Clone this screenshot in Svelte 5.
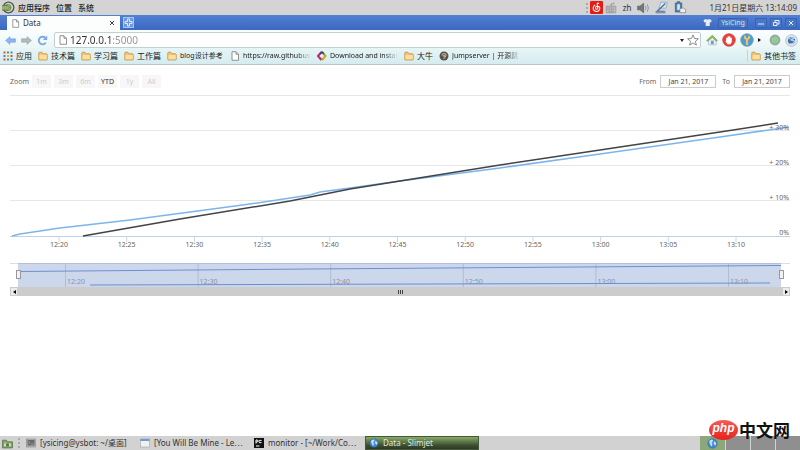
<script>
  const menus = ["应用程序", "位置", "系统"];

  const bookmarks = [
    { label: "应用", icon: "apps", width: 16 },
    { label: "技术篇", icon: "folder", width: 24 },
    { label: "学习篇", icon: "folder", width: 24 },
    { label: "工作篇", icon: "folder", width: 24 },
    { label: "blog设计参考", icon: "folder", width: 44 },
    { label: "https://raw.githubus", icon: "page", width: 68, fade: true },
    { label: "Download and instal", icon: "diamond", width: 68, fade: true },
    { label: "大牛", icon: "folder", width: 16 },
    { label: "Jumpserver | 开源跳", icon: "jump", width: 68, fade: true },
  ];

  const ranges = ["1m", "3m", "6m", "YTD", "1y", "All"];
  let range = $state("YTD");
  let address = $state("127.0.0.1:5000");
  let from = $state("Jan 21, 2017");
  let to = $state("Jan 21, 2017");

  const ticks = ["12:20", "12:25", "12:30", "12:35", "12:40", "12:45", "12:50", "12:55", "13:00", "13:05", "13:10"];
  const navTicks = ["12:20", "12:30", "12:40", "12:50", "13:00", "13:10"];
  const levels = ["0%", "+ 10%", "+ 20%", "+ 30%"];

  const blue = "2,141 10,139 50,133 120,125 240,109 300,100 310,97 340,93 390,86 490,73 590,59 710,42 779,32";
  const black = "73,141 170,124 280,106 340,94 390,86 490,70 590,55 710,37 768,28";

  const tasks = [
    { label: "[ysicing@ysbot: ~/桌面]", icon: "terminal" },
    { label: "[You Will Be Mine - Le⋯", icon: "window" },
    { label: "monitor - [~/Work/Co⋯", icon: "pycharm" },
    { label: "Data - Slimjet", icon: "globe", active: true },
  ];
</script>

{#snippet icon(name, size = 10)}
  <svg class="icon" width={size} height={size} viewBox="0 0 20 20" aria-hidden="true">
    {#if name === "suse"}
      <circle cx="10" cy="10" r="8.200" fill="none" stroke="#4d5747" stroke-width="2" />
      <circle cx="9" cy="10" r="4.400" fill="none" stroke="#6f8f4e" stroke-width="2" />
      <path d="M0 7h8l4 3-4 4H0" fill="#8fb56a" stroke="#59653f" />
    {:else if name === "apps"}
      {#each [0, 1, 2] as row}
        {#each [0, 1, 2] as col}
          <rect x={1 + col * 7} y={1 + row * 7} width="4" height="4" fill={["#e0493a", "#4a9c55", "#4a7fd8", "#efb32f"][(row * 2 + col) % 4]} />
        {/each}
      {/each}
    {:else if name === "folder"}
      <path d="M1.5 17V4q0-1.500 1.500-1.500h5l2 3h7q1.500 0 1.500 1.500v10q0 1-1 1h-15q-1 0-1-1z" fill="#f5c36f" stroke="#c28a3b" stroke-width="1.400" />
      <path d="M3 8h14.500v8.500H3z" fill="#ffdf9f" />
    {:else if name === "page"}
      <path d="M4 1.500h8l5 5v12H4z" fill="#fff" stroke="#777" stroke-width="1.600" />
      <path d="M12 1.500v5h5" fill="#ddd" stroke="#777" stroke-width="1.600" />
    {:else if name === "diamond"}
      <path d="M9 2L2 10l7 8" fill="none" stroke="#c32672" stroke-width="4" />
      <path d="M10 2l7 8-7 8" fill="none" stroke="#9cae2c" stroke-width="4" />
      <path d="M6 6l4-4 4 4" fill="none" stroke="#4a3b79" stroke-width="3" />
      <path d="M12 16l5-6" stroke="#e8a92c" stroke-width="3" />
    {:else if name === "jump"}
      <circle cx="10" cy="10" r="9" fill="#5b5148" />
      <path d="M6 9q-1-4 4-4 5 0 4 4-1 3-5 7M9 8v3M12 8l-2 4" fill="none" stroke="#d6cbbb" stroke-width="1.700" />
    {:else if name === "back" || name === "forward"}
      <path
        d={name === "back" ? "M1 10l8-7v4h10v6H9v4z" : "M19 10l-8-7v4H1v6h10v4z"}
        fill={name === "back" ? "#8db7ee" : "#b5b9bb"}
        stroke={name === "back" ? "#6b98d8" : "#969b9e"}
      />
    {:else if name === "reload"}
      <path d="M16 14a7 7 0 1 1-1-9" fill="none" stroke="#7ba7e6" stroke-width="3.400" />
      <path d="M18.500 1v8h-8z" fill="#7ba7e6" />
    {:else if name === "star"}
      <path d="M10 1.500l2.600 6 6.400.5-5 4.200 1.600 6.300L10 15l-5.600 3.500L6 12.200 1 8l6.400-.5z" fill="#fff" stroke="#777" stroke-width="1.400" />
    {:else if name === "home"}
      <path d="M4 9v9h13V9l-6.500-5z" fill="#eef4fa" stroke="#9aa9b3" />
      <path d="M1 11l9.500-9 8.500 9-2 1-6.500-6L3 12z" fill="#8cc159" stroke="#6e9a48" />
      <path d="M8 11h5v6H8z" fill="#6f9cdc" />
    {:else if name === "stop"}
      <circle cx="10" cy="10" r="9" fill="#e8403e" stroke="#c93a37" />
      <path d="M6 10V7q1-1 2 0V5q1-1 2 0 1-1 2 0v2q1-1 2 0v6l-2 3H8l-3-4z" fill="#fff" />
    {:else if name === "key"}
      <circle cx="10" cy="10" r="9" fill="#4d9dd2" stroke="#7295ad" />
      <path d="M10 9v8" fill="none" stroke="#f2c25c" stroke-width="3" />
      <path d="M7 4v3l3 2 3-2V4" fill="none" stroke="#f2c25c" stroke-width="2.600" />
    {:else if name === "dot"}
      <circle cx="10" cy="10" r="7.500" fill="#88d190" stroke="#a0a4a3" stroke-width="3" />
    {:else if name === "slimjet"}
      <circle cx="10" cy="10" r="9" fill="#dbe6ef" stroke="#9fb0bf" />
      <circle cx="10" cy="10" r="5.500" fill="#3e6ea9" />
      <path d="M5 8q5-4 9-1l-5 2 6 2q-2 5-7 4" fill="none" stroke="#b9d6f3" stroke-width="1.600" />
    {:else if name === "globe"}
      <circle cx="10" cy="10" r="8.500" fill="#438bd0" stroke="#315f9d" />
      <path d="M4 6q3-4 6-3l1 3-3 2 2 3-2 5-3-6zM13 6l4 3-2 5-3-4z" fill="#c4e4fb" />
    {:else if name === "music"}
      <rect width="20" height="20" rx="2" fill="#e51c12" />
      <path d="M14 4q-3-2-3 1l1 6q-1 3-3 1-2-3 2-4 5 0 4 4-1 4-5 4-6-1-5-6 1-3 3-4" fill="none" stroke="#fff" stroke-width="1.600" />
    {:else if name === "keyboard"}
      <path d="M10 7V3h5V1M2 7h16v11H2z" fill="#c1c1c1" stroke="#999" stroke-width="1.500" />
      <path d="M4 10h12M4 13h12M6 16h8" stroke="#888" stroke-width="1.500" stroke-dasharray="2 1" />
    {:else if name === "sound"}
      <path d="M1 7h4l6-5v16l-6-5H1z" fill="#777" stroke="#4d4d4d" />
      <path d="M14 7q2 3 0 6M17 4q4 6 0 12" fill="none" stroke="#6e8fbd" stroke-width="1.500" />
    {:else if name === "network"}
      <path d="M9 2h10l-2 9H6z" fill="#dbe8f5" stroke="#7f9dbb" />
      <path d="M16 4L3 16h12" fill="none" stroke="#4871a5" stroke-width="2" />
      <path d="M1 16h15v3H1z" fill="#89939c" />
    {:else if name === "battery"}
      <path d="M5 1h4v2h3v14H2V3h3z" fill="#517eac" stroke="#365c85" />
      <path d="M5 5h4v9H5z" fill="#dce9f2" />
      <path d="M9 12q6-3 9 1v5H9z" fill="#eee" stroke="#777" />
    {:else if name === "shirt"}
      <path d="M6 2L1 5l2 5 3-1v9h9V9l3 1 1-5-5-3q-4 3-8 0z" fill="#e6edf7" />
    {:else if name === "files"}
      <path d="M1 4h7l2 3h9v11H1z" fill="#87a86d" stroke="#587247" stroke-width="1.500" />
      <path d="M4 10h12v5H4z" fill="#d6e1c9" />
      <circle cx="10" cy="12.500" r="3" fill="#587247" />
    {:else if name === "terminal"}
      <rect x="1" y="2" width="18" height="16" fill="#b5b5b5" stroke="#777" />
      <rect x="3" y="4" width="14" height="11" fill="#696b69" />
      <path d="M5 7l3 2-3 2M10 12h5" fill="none" stroke="#ccc" />
    {:else if name === "window"}
      <rect x="1" y="2" width="18" height="16" fill="#f1f1f1" stroke="#999" />
      <path d="M1 2h18v4H1z" fill="#6f9bd1" />
    {:else if name === "pycharm"}
      <rect width="20" height="20" fill="#111" />
      <path d="M4 11V4h3q3 2 0 4H4M15 5q-5-2-5 2t5 2M4 16h7" fill="none" stroke="#fff" stroke-width="2" />
    {/if}
  </svg>
{/snippet}

<div class="desktop">
  <header class="panel">
    {@render icon("suse", 13)}
    <nav class="menus">
      {#each menus as menu}<button>{menu}</button>{/each}
    </nav>
    <div class="tray">
      <div class="applets">
        <span class="grip"></span>
        {@render icon("music", 13)}
        {@render icon("keyboard", 12)}
      </div>
      <span class="lang">zh</span>
      {@render icon("sound", 12)}
      {@render icon("network", 13)}
      {@render icon("battery", 13)}
    </div>
    <time>1月21日星期六 13:14:09</time>
  </header>

  <div class="tabs">
    <div class="tab">
      {@render icon("page", 9)}
      <span>Data</span>
      <button aria-label="Close tab">
        <svg width="6" height="6" viewBox="0 0 6 6"><path d="M1 1l4 4M5 1L1 5" stroke="#444" /></svg>
      </button>
    </div>
    <button class="new-tab" aria-label="New tab">
      <svg width="9" height="9" viewBox="0 0 9 9"><path d="M3.500 1h2v2.500H8v2H5.500V8h-2V5.500H1v-2h2.500z" fill="none" stroke="#fff" stroke-width=".8" /></svg>
    </button>
    <div class="window-controls">
      {@render icon("shirt", 9)}
      <button class="user">YsiCing</button>
      <button aria-label="Minimize"><svg width="8" height="8" viewBox="0 0 8 8"><path d="M1 5h6" /></svg></button>
      <button aria-label="Restore"><svg width="8" height="8" viewBox="0 0 8 8"><path d="M3 3V1.500h4V5H5M1.500 3.500h3.500v3H1.500z" /></svg></button>
      <button aria-label="Close"><svg width="8" height="8" viewBox="0 0 8 8"><path d="M2 2l4 4M6 2L2 6" /></svg></button>
    </div>
  </div>

  <div class="toolbar">
    <button aria-label="Back">{@render icon("back", 11)}</button>
    <button aria-label="Forward">{@render icon("forward", 11)}</button>
    <button aria-label="Reload">{@render icon("reload", 11)}</button>
    <div class="address">
      {@render icon("page", 10)}
      <input type="text" aria-label="Address" bind:value={address} />
      <span class="caret"></span>
      {@render icon("star", 12)}
    </div>
    <div class="extensions">
      <button aria-label="Home">{@render icon("home", 12)}</button>
      <button aria-label="Block">{@render icon("stop", 14)}</button>
      <button aria-label="Passwords">{@render icon("key", 14)}</button>
      <span class="more"></span>
      <button aria-label="Status">{@render icon("dot", 12)}</button>
      <button aria-label="Menu">{@render icon("slimjet", 13)}</button>
    </div>
  </div>

  <nav class="bookmarks">
    {#each bookmarks as item}
      <a href="#{item.icon}">
        {@render icon(item.icon, 10)}
        <span class:fade={item.fade} class:latin={/[a-z]/.test(item.label)} style="width: {item.width}px">{item.label}</span>
      </a>
    {/each}
    <a class="other" href="#other">{@render icon("folder", 10)}<span>其他书签</span></a>
  </nav>

  <main>
    <div class="controls">
      <span>Zoom</span>
      <div class="ranges">
        {#each ranges as r}
          <button class:selected={r === range} onclick={() => (range = r)}>{r}</button>
        {/each}
      </div>
      <div class="dates">
        <label for="from">From</label>
        <input id="from" type="text" bind:value={from} />
        <label for="to">To</label>
        <input id="to" type="text" bind:value={to} />
      </div>
    </div>

    <svg class="chart" viewBox="0 0 780 160">
      <g shape-rendering="crispEdges" stroke="#e6e6e6">
        {#each [0, 1, 2, 3] as i}
          <path d="M0 {0.5 + i * 35}H780" />
        {/each}
        <path d="M0 141.500H780" stroke="#c3cfe4" />
      </g>
      {#each ticks as tick, i}
        <path d="M{49 + i * 67.7} 142v5" stroke="#ccd6eb" />
        <text x={49 + i * 67.7} y="152" text-anchor="middle">{tick}</text>
      {/each}
      <polyline points={blue} stroke="#7cb5ec" />
      <polyline points={black} stroke="#434348" />
      {#each levels as level, i}
        <text x="779" y={140 - i * 35} text-anchor="end">{level}</text>
      {/each}
    </svg>

    <div class="navigator">
      <svg viewBox="0 0 780 24">
        <path d="M0 .5H780" stroke="#ddd" />
        {#each navTicks as tick, i}
          <path d="M{55.500 + i * 132.6} 1V24" stroke="#d4d8df" />
          <text x={57 + i * 132.6} y="21" class="faint">{tick}</text>
        {/each}
        <path d="M8 8.500L300 6 771 2.500" stroke="#6f94d8" fill="none" />
        <path d="M80 22L760 20" stroke="#6f94d8" />
        <rect x="8" y="0" width="763" height="24" fill="#6685c2" fill-opacity=".33" />
      </svg>
      <button class="handle left" aria-label="Range start"></button>
      <button class="handle right" aria-label="Range end"></button>
    </div>
    <div class="scrollbar">
      <button aria-label="Scroll left"><svg width="3" height="4" viewBox="0 0 3 4"><path d="M3 0v4L0 2z" /></svg></button>
      <span class="thumb"><i></i><i></i><i></i></span>
      <button aria-label="Scroll right"><svg width="3" height="4" viewBox="0 0 3 4"><path d="M0 0v4l3-2z" /></svg></button>
    </div>
  </main>

  <footer class="taskbar">
    {@render icon("files", 11)}
    <span class="grip"></span>
    {#each tasks as task}
      <button class="task" class:active={task.active}>
        {@render icon(task.icon, 10)}
        <span>{task.label}</span>
      </button>
    {/each}
    <div class="pager">
      <button class="current" aria-label="Workspace 1">{@render icon("globe", 11)}</button>
      <button aria-label="Workspace 2"></button>
      <button aria-label="Workspace 3"></button>
      <button aria-label="Workspace 4"></button>
    </div>
  </footer>

  <div class="watermark"><span class="php">php</span><span>中文网</span></div>
</div>

<style>
  :global(body) {
    margin: 0;
    background: #fff;
  }

  .desktop {
    position: relative;
    display: flex;
    flex-direction: column;
    min-height: 100vh;
    font: 8px/12px "Noto Sans", "Noto Sans CJK SC", sans-serif;
    color: #333;
  }

  .desktop * {
    box-sizing: border-box;
  }

  button,
  input {
    margin: 0;
    padding: 0;
    border: 0;
    background: none;
    font: inherit;
    color: inherit;
  }

  button {
    display: flex;
    align-items: center;
    justify-content: center;
  }

  svg {
    display: block;
    flex: none;
  }

  .panel {
    display: flex;
    align-items: center;
    height: 15px;
    padding: 0 3px 0 2px;
    background: #d4d4d4;
  }

  .menus {
    display: flex;
    gap: 6px;
    margin-left: 3px;
    font-weight: 500;
    color: #222;
  }

  .tray {
    display: flex;
    align-items: center;
    gap: 6px;
    margin-left: auto;
  }

  .applets {
    display: flex;
    align-items: center;
    gap: 2px;
  }

  .grip {
    width: 2px;
    height: 10px;
    border-left: 2px dotted #aaa;
  }

  time {
    margin-left: 22px;
    white-space: nowrap;
  }

  .tabs {
    display: flex;
    align-items: flex-end;
    height: 15px;
    padding-left: 7px;
    background: linear-gradient(#5180d4, #3c68c0);
  }

  .tab {
    display: flex;
    align-items: center;
    gap: 3px;
    width: 113px;
    height: 14px;
    padding: 0 5px 0 4px;
    background: #fcfefe;
  }

  .tab button {
    margin-left: auto;
  }

  .new-tab {
    width: 11px;
    height: 11px;
    margin: 0 0 2px 3px;
    border: 1px solid #a9c4f0;
    background: #6b98e0;
  }

  .window-controls {
    display: flex;
    align-items: center;
    gap: 3px;
    height: 15px;
    margin-left: auto;
    padding-right: 3px;
  }

  .window-controls button {
    width: 12px;
    height: 10px;
    border: 1px solid #3862b2;
    background: #4776cb;
  }

  .window-controls button path {
    fill: none;
    stroke: #e5ecf8;
  }

  .window-controls .user {
    width: 30px;
    margin: 0 4px 0 3px;
    color: #dce8c5;
    font-size: 7px;
  }

  .toolbar {
    display: flex;
    align-items: center;
    gap: 5px;
    height: 18px;
    padding: 2px 3px 0 5px;
    background: linear-gradient(#fbfefe, #eaf6f7);
  }

  .address {
    display: flex;
    flex: 1;
    align-items: center;
    height: 16px;
    margin-left: 1px;
    padding: 0 1px 0 3px;
    border: 1px solid #c5ced1;
    border-radius: 2px;
    background: #fff;
  }

  .address input {
    flex: 1;
    min-width: 0;
    margin-left: 2px;
    font-size: 10px;
    color: transparent;
    caret-color: #333;
    background: linear-gradient(to right, #2f2f2f 43px, #949494 43px);
    -webkit-background-clip: text;
    background-clip: text;
  }

  .caret {
    margin-right: 3px;
    border: 2px solid transparent;
    border-top: 3px solid #222;
    border-bottom: 0;
  }

  .extensions {
    display: flex;
    align-items: center;
    gap: 4px;
    width: 91px;
  }

  .more {
    border: 2px solid transparent;
    border-left: 3px solid #111;
    border-right: 0;
    margin-right: 4px;
  }

  .bookmarks {
    display: flex;
    align-items: center;
    gap: 6px;
    height: 17px;
    padding: 0 4px 0 3px;
    border-bottom: 1px solid #b8c4c6;
    background: linear-gradient(#e7f5f6, #d5ecef);
  }

  .bookmarks a {
    display: flex;
    align-items: center;
    gap: 3px;
    color: #222;
    text-decoration: none;
  }

  .bookmarks span {
    white-space: nowrap;
  }

  .bookmarks .latin {
    font-size: 7px;
  }

  .bookmarks .fade {
    mask-image: linear-gradient(to left, transparent, #000 14px);
  }

  .bookmarks .other {
    margin-left: auto;
    padding-left: 3px;
    border-left: 1px solid #c3d2d5;
  }

  main {
    flex: 1;
    padding: 10px 10px 0;
    font-size: 7px;
    color: #666;
  }

  .controls {
    display: flex;
    align-items: center;
    height: 13px;
    margin-bottom: 7px;
  }

  .ranges {
    display: flex;
    gap: 3px;
    margin-left: 3px;
  }

  .ranges button {
    width: 19px;
    height: 13px;
    background: #f7f7f7;
    color: #ccc;
  }

  .ranges .selected {
    color: #333;
  }

  .dates {
    display: flex;
    align-items: center;
    gap: 4px;
    margin-left: auto;
  }

  .dates input {
    width: 56px;
    height: 13px;
    border: 1px solid #ccc;
    text-align: center;
    color: #444;
  }

  .dates input + label {
    margin-left: 2px;
  }

  .chart {
    width: 100%;
    margin-bottom: 8px;
  }

  .chart polyline {
    fill: none;
    stroke-width: 1.5;
  }

  text {
    font-size: 7px;
    fill: #666;
  }

  .faint {
    fill: #999;
  }

  .navigator {
    position: relative;
  }

  .navigator svg {
    width: 100%;
  }

  .handle {
    position: absolute;
    top: 7px;
    width: 5px;
    height: 9px;
    border: 1px solid #999;
    background: #f2f2f2;
  }

  .left {
    left: 6px;
  }

  .right {
    right: 6px;
  }

  .scrollbar {
    display: flex;
    height: 9px;
    background: #ccc;
  }

  .scrollbar button {
    width: 8px;
    border: 1px solid #ccc;
    background: #ebebeb;
  }

  .thumb {
    display: flex;
    flex: 1;
    align-items: center;
    justify-content: center;
    gap: 1px;
  }

  .thumb i {
    width: 1px;
    height: 4px;
    background: #444;
  }

  .taskbar {
    display: flex;
    align-items: center;
    height: 14px;
    padding-left: 2px;
    background: #d2d2d2;
  }

  .taskbar .grip {
    margin: 0 3px 0 5px;
  }

  .task {
    justify-content: flex-start;
    gap: 4px;
    width: 114px;
    height: 14px;
    padding-left: 3px;
    white-space: nowrap;
  }

  .task.active {
    border: 1px solid #46583a;
    background: linear-gradient(#87aa68, #3c4e30 70%, #2d3b24);
    color: #e3e8dd;
  }

  .pager {
    display: flex;
    gap: 1px;
    margin-left: auto;
  }

  .pager button {
    width: 24px;
    height: 14px;
    background: #8f8f8f;
  }

  .pager .current {
    width: 25px;
    background: #8ca779;
  }

  .watermark {
    position: absolute;
    right: 10px;
    bottom: 10px;
    display: flex;
    align-items: center;
    gap: 1px;
    font: 700 17px/20px "Noto Sans CJK SC", sans-serif;
    color: #111;
  }

  .php {
    width: 29px;
    height: 20px;
    border-radius: 50%;
    background: linear-gradient(#f75b55, #e4231d);
    color: #fff;
    font: italic 700 12px/17px "Liberation Sans", sans-serif;
    text-align: center;
  }
</style>
